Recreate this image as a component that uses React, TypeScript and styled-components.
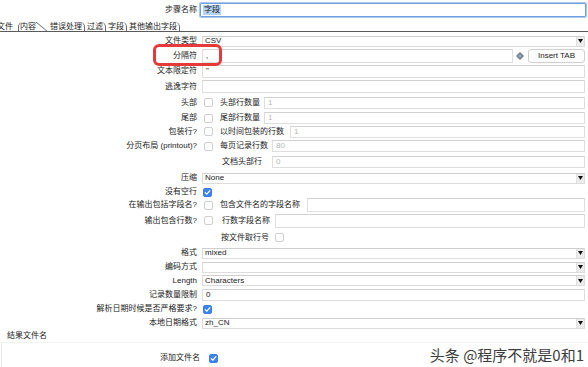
import React from "react";
import styled, { createGlobalStyle } from "styled-components";

const Global = createGlobalStyle`
  html, body { margin: 0; padding: 0; background: #fff; }
  body {
    font-family: "Liberation Sans", "Noto Sans CJK SC", sans-serif;
    font-size: 8px;
    color: #222;
  }
`;

const Page = styled.div`
  position: relative;
  width: 588px;
  height: 367px;
  overflow: hidden;
  background: #fff;
  line-height: 10px;
`;

const HeaderRow = styled.div`
  display: grid;
  grid-template-columns: 198px 1fr;
  height: 20px;
  align-items: center;
`;

const Label = styled.div<{ $pr?: number }>`
  text-align: right;
  white-space: nowrap;
  padding-right: ${(p) => p.$pr ?? 1}px;
  color: #222;
`;

const StepInput = styled.div`
  margin: 0 2px 0 2px;
  height: 14px;
  box-sizing: border-box;
  border: 1px solid #6f9fdf;
  box-shadow: 0 0 0 1px #a9c7ef;
  border-radius: 1px;
  display: flex;
  align-items: center;
  padding-left: 2px;
`;

const Selected = styled.span`
  background: #b5d3f6;
  padding: 0 1px;
  line-height: 10px;
`;

const TabBar = styled.div`
  display: flex;
  align-items: flex-end;
  height: 11px;
  border-bottom: 1px solid #5a5a5a;
  overflow: hidden;
`;

const Tab = styled.div<{ $first?: boolean }>`
  height: 9px;
  line-height: 9px;
  padding: 0 2px 0 2px;
  margin-left: ${(p) => (p.$first ? -5 : 0)}px;
  padding-right: ${(p) => (p.$first ? 4 : 2)}px;
  border-right: 1px solid ${(p) => (p.$first ? "transparent" : "#6a6a6a")};
  border-top-right-radius: 5px;
  white-space: nowrap;
  color: #222;
`;

const ActiveTab = styled.div`
  display: flex;
  align-items: flex-end;
  height: 10px;
  background: #fff;
  margin-bottom: -1px;
`;

const ActiveText = styled.div`
  height: 10px;
  line-height: 10px;
  padding-left: 1px;
  border-left: 1px solid #6a6a6a;
  border-top-left-radius: 5px;
  white-space: nowrap;
`;

const Form = styled.div`
  padding-top: 2px;
`;

const Row = styled.div<{ $h: number }>`
  display: grid;
  grid-template-columns: 198px 1fr;
  height: ${(p) => p.$h}px;
  align-items: center;
`;

const Cell = styled.div`
  display: flex;
  align-items: center;
  padding: 0 3px 0 4px;
  min-width: 0;
`;

const TextField = styled.div<{ $muted?: boolean; $h?: number }>`
  flex: 1;
  min-width: 0;
  height: ${(p) => p.$h ?? 13}px;
  box-sizing: border-box;
  border: 1px solid #dedede;
  border-top-color: #d2d2d2;
  background: #fff;
  padding: 0 3px;
  display: flex;
  align-items: center;
  color: ${(p) => (p.$muted ? "#b8b8b8" : "#222")};
  white-space: nowrap;
`;

const SelectBox = styled.div`
  flex: 1;
  height: 11px;
  box-sizing: border-box;
  border: 1px solid #dcdcdc;
  border-top-color: #cfcfcf;
  background: #fff;
  display: flex;
  align-items: center;
  padding-left: 2px;
  white-space: nowrap;
`;

const SelectText = styled.span`
  flex: 1;
`;

const ArrowBox = styled.div`
  width: 7px;
  height: 9px;
  background: #ececec;
  border-left: 1px solid #e0e0e0;
  display: flex;
  align-items: center;
  justify-content: center;
`;

const Box = styled.div<{ $checked?: boolean; $ml?: number }>`
  width: 9px;
  height: 9px;
  box-sizing: border-box;
  flex: none;
  margin-left: ${(p) => p.$ml ?? 2}px;
  border-radius: 2px;
  border: 1px solid ${(p) => (p.$checked ? "#3a7ee6" : "#cfcfcf")};
  background: ${(p) => (p.$checked ? "#3d85ec" : "#fff")};
  display: flex;
  align-items: center;
  justify-content: center;
`;

const SubLabel = styled.div<{ $ml: number; $w: number }>`
  margin-left: ${(p) => p.$ml}px;
  width: ${(p) => p.$w}px;
  flex: none;
  white-space: nowrap;
  color: #222;
`;

const IconWrap = styled.div`
  margin: 0 4px 0 3px;
  width: 8px;
  height: 8px;
  display: flex;
`;

const Button = styled.div`
  width: 57px;
  height: 14px;
  box-sizing: border-box;
  border: 1px solid #d0d0d0;
  border-radius: 3px;
  background: #fff;
  display: flex;
  align-items: center;
  justify-content: center;
  color: #222;
  white-space: nowrap;
`;

const GroupTitle = styled.div`
  height: 12px;
  line-height: 12px;
  padding-left: 7px;
  color: #222;
`;

const Group = styled.div`
  margin-left: 1px;
  height: 25px;
  border-left: 1px solid #ececec;
  border-top: 1px solid #f2f2f2;
  padding-top: 8px;
`;

const GroupRow = styled.div`
  display: grid;
  grid-template-columns: 199px 1fr;
  height: 14px;
  align-items: center;
`;

const Highlight = styled.div`
  position: absolute;
  left: 153px;
  top: 44px;
  width: 69px;
  height: 22px;
  box-sizing: border-box;
  border: 3px solid #e6393a;
  border-radius: 6px;
  pointer-events: none;
`;

const Watermark = styled.div`
  position: absolute;
  right: 4px;
  bottom: 4px;
  font-family: "Noto Sans CJK SC", "Liberation Sans", sans-serif;
  font-size: 15px;
  line-height: 16px;
  color: #3c3c3c;
  text-shadow: 0 0 2px #fff, 0 0 2px #fff, 0 0 1px #fff;
  white-space: nowrap;
`;

const Arrow = () => (
  <svg width="5" height="4" viewBox="0 0 5 4">
    <path d="M0 0 L5 0 L2.5 4 Z" fill="#111" />
  </svg>
);

const Check = ({ checked, ml }: { checked?: boolean; ml?: number }) => (
  <Box $checked={checked} $ml={ml}>
    {checked && (
      <svg width="7" height="7" viewBox="0 0 7 7">
        <path d="M1.2 3.6 L2.9 5.2 L5.9 1.6" fill="none" stroke="#fff" strokeWidth="1.2" strokeLinecap="round" strokeLinejoin="round" />
      </svg>
    )}
  </Box>
);

const Select = ({ value }: { value?: string }) => (
  <SelectBox>
    <SelectText>{value}</SelectText>
    <ArrowBox>
      <Arrow />
    </ArrowBox>
  </SelectBox>
);

const Slant = () => (
  <svg width="12" height="10" viewBox="0 0 12 10">
    <line x1="0" y1="0" x2="12" y2="10" stroke="#6a6a6a" strokeWidth="1" />
  </svg>
);

const Diamond = () => (
  <svg width="8" height="8" viewBox="0 0 8 8">
    <path d="M4 0 L8 4 L4 8 L0 4 Z" fill="#6e7e8f" />
    <path d="M4 2.2 L5.8 4 L4 5.8 L2.2 4 Z" fill="#9fb0c0" />
  </svg>
);

export default function App() {
  return (
    <Page>
      <Global />
      <HeaderRow>
        <Label>步骤名称</Label>
        <StepInput>
          <Selected>字段</Selected>
        </StepInput>
      </HeaderRow>

      <TabBar>
        <Tab $first>文件</Tab>
        <ActiveTab>
          <ActiveText>内容</ActiveText>
          <Slant />
        </ActiveTab>
        <Tab>错误处理</Tab>
        <Tab>过滤</Tab>
        <Tab>字段</Tab>
        <Tab>其他输出字段</Tab>
      </TabBar>

      <Form>
        <Row $h={14}>
          <Label>文件类型</Label>
          <Cell><Select value="CSV" /></Cell>
        </Row>
        <Row $h={15}>
          <Label>分隔符</Label>
          <Cell>
            <TextField $h={14}>,</TextField>
            <IconWrap><Diamond /></IconWrap>
            <Button>Insert TAB</Button>
          </Cell>
        </Row>
        <Row $h={16}>
          <Label>文本限定符</Label>
          <Cell><TextField>"</TextField></Cell>
        </Row>
        <Row $h={15}>
          <Label>逃逸字符</Label>
          <Cell><TextField /></Cell>
        </Row>
        <Row $h={17}>
          <Label>头部</Label>
          <Cell>
            <Check />
            <SubLabel $ml={7} $w={44}>头部行数量</SubLabel>
            <TextField $muted $h={12}>1</TextField>
          </Cell>
        </Row>
        <Row $h={14}>
          <Label>尾部</Label>
          <Cell>
            <Check />
            <SubLabel $ml={7} $w={44}>尾部行数量</SubLabel>
            <TextField $muted $h={12}>1</TextField>
          </Cell>
        </Row>
        <Row $h={13}>
          <Label>包装行?</Label>
          <Cell>
            <Check />
            <SubLabel $ml={7} $w={70}>以时间包装的行数</SubLabel>
            <TextField $muted $h={12}>1</TextField>
          </Cell>
        </Row>
        <Row $h={16}>
          <Label>分页布局 (printout)?</Label>
          <Cell>
            <Check />
            <SubLabel $ml={7} $w={52}>每页记录行数</SubLabel>
            <TextField $muted $h={12}>80</TextField>
          </Cell>
        </Row>
        <Row $h={16}>
          <Label />
          <Cell>
            <SubLabel $ml={20} $w={50}>文档头部行</SubLabel>
            <TextField $muted $h={12}>0</TextField>
          </Cell>
        </Row>
        <Row $h={16}>
          <Label>压缩</Label>
          <Cell><Select value="None" /></Cell>
        </Row>
        <Row $h={12}>
          <Label>没有空行</Label>
          <Cell><Check checked ml={1} /></Cell>
        </Row>
        <Row $h={14}>
          <Label>在输出包括字段名?</Label>
          <Cell>
            <Check />
            <SubLabel $ml={7} $w={87}>包含文件名的字段名称</SubLabel>
            <TextField $h={14} />
          </Cell>
        </Row>
        <Row $h={17}>
          <Label>输出包含行数?</Label>
          <Cell>
            <Check />
            <SubLabel $ml={9} $w={53}>行数字段名称</SubLabel>
            <TextField $h={14} />
          </Cell>
        </Row>
        <Row $h={17}>
          <Label />
          <Cell>
            <SubLabel $ml={19} $w={52}>按文件取行号</SubLabel>
            <Check />
          </Cell>
        </Row>
        <Row $h={14}>
          <Label>格式</Label>
          <Cell><Select value="mixed" /></Cell>
        </Row>
        <Row $h={14}>
          <Label>编码方式</Label>
          <Cell><Select /></Cell>
        </Row>
        <Row $h={13}>
          <Label>Length</Label>
          <Cell><Select value="Characters" /></Cell>
        </Row>
        <Row $h={15}>
          <Label>记录数量限制</Label>
          <Cell><TextField $h={12}>0</TextField></Cell>
        </Row>
        <Row $h={14}>
          <Label>解析日期时候是否严格要求?</Label>
          <Cell><Check checked ml={1} /></Cell>
        </Row>
        <Row $h={14}>
          <Label>本地日期格式</Label>
          <Cell><Select value="zh_CN" /></Cell>
        </Row>
        <GroupTitle>结果文件名</GroupTitle>
        <Group>
          <GroupRow>
            <Label>添加文件名</Label>
            <Cell><Check checked ml={4} /></Cell>
          </GroupRow>
        </Group>
      </Form>

      <Highlight />
      <Watermark>头条 @程序不就是0和1</Watermark>
    </Page>
  );
}
